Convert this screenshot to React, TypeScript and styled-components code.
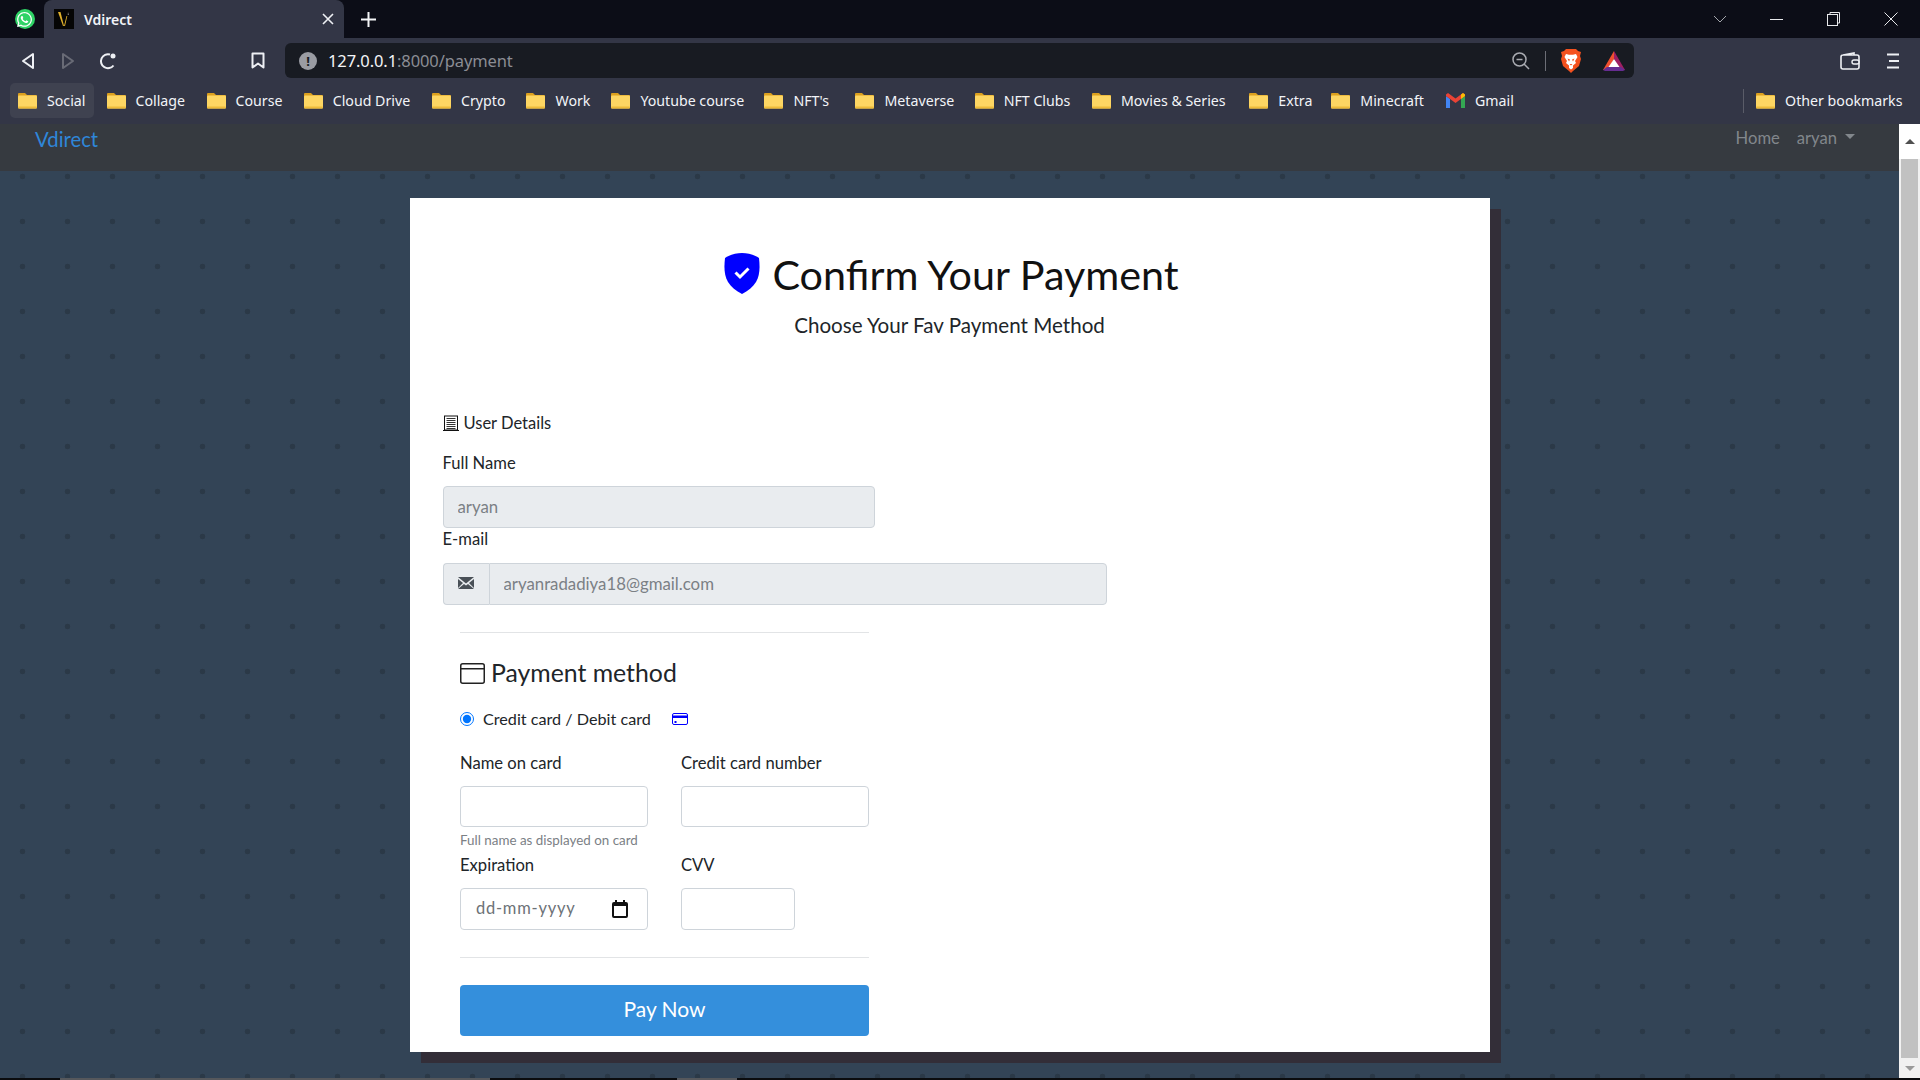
import React from 'react';
import styled, { createGlobalStyle } from 'styled-components';
import { FaWhatsapp } from 'react-icons/fa';

const GlobalStyle = createGlobalStyle`
  html, body {
    margin: 0;
    height: 100%;
    overflow: hidden;
    background: #0c0d17;
  }
  * {
    box-sizing: border-box;
  }
`;

const chromeFont = `'Noto Sans', 'Open Sans', sans-serif`;
const pageFont = `'Lato', 'Noto Sans', sans-serif`;

const Screen = styled.div`
  display: flex;
  flex-direction: column;
  width: 1920px;
  height: 1080px;
  overflow: hidden;
  font-family: ${chromeFont};
`;

/* browser chrome */
const TabStrip = styled.div`
  display: flex;
  align-items: stretch;
  height: 38px;
  background: #0c0d17;
  flex: none;
`;

const PinnedTab = styled.div`
  display: flex;
  align-items: center;
  justify-content: center;
  width: 44px;
  padding-left: 5px;
`;

const WhatsappBadge = styled.div`
  display: flex;
  align-items: center;
  justify-content: center;
  width: 20px;
  height: 20px;
  border-radius: 50%;
  background: #2fd366;
  color: #fff;
  font-size: 17px;
`;

const ActiveTab = styled.div`
  display: flex;
  align-items: center;
  width: 300px;
  padding: 0 10px;
  background: #333646;
  border-radius: 8px 8px 0 0;
`;

const Favicon = styled.svg`
  width: 20px;
  height: 20px;
  flex: none;
`;

const TabTitle = styled.span`
  margin-left: 10px;
  flex: 1;
  color: #f2f4f8;
  font-size: 14px;
  font-weight: 600;
`;

const NewTab = styled.div`
  display: flex;
  align-items: center;
  margin-left: 17px;
`;

const WindowControls = styled.div`
  display: flex;
  align-items: center;
  margin-left: auto;
`;

const WindowButton = styled.div<{ $width: number }>`
  display: flex;
  align-items: center;
  justify-content: center;
  width: ${({ $width }) => $width}px;
`;

const Toolbar = styled.div`
  display: flex;
  align-items: center;
  height: 40px;
  padding-top: 5px;
  background: #333646;
  flex: none;
`;

const ToolButton = styled.div<{ $width: number; $end?: boolean; $left?: number }>`
  display: flex;
  align-items: center;
  justify-content: ${({ $end }) => ($end ? 'flex-end' : 'center')};
  width: ${({ $width }) => $width}px;
  margin-left: ${({ $left }) => $left ?? 0}px;
  padding-right: ${({ $end }) => ($end ? '20px' : '0')};
  flex: none;
`;

const AddressBar = styled.div`
  display: flex;
  align-items: center;
  width: 1349px;
  height: 35px;
  padding: 0 9px 0 14px;
  border-radius: 6px;
  background: #181b22;
  flex: none;
`;

const SiteInfo = styled.div`
  display: flex;
  align-items: center;
  justify-content: center;
  width: 18px;
  height: 18px;
  border-radius: 50%;
  background: #9a9ca3;
  color: #181b22;
  font-size: 13px;
  font-weight: 700;
`;

const Url = styled.span`
  margin-left: 11px;
  color: #8b8d94;
  font-size: 16.5px;
  flex: 1;
  letter-spacing: -0.1px;
`;

const UrlHost = styled.span`
  color: #f4f5f7;
`;

const AddressIcons = styled.div`
  display: flex;
  align-items: center;
`;

const BraveGap = styled.span`
  width: 22px;
`;

const AddressDivider = styled.div`
  width: 1px;
  height: 20px;
  margin: 0 15px;
  background: #6c6e76;
`;

const BookmarksBar = styled.div`
  display: flex;
  align-items: center;
  height: 46px;
  padding: 0 13px 1px 10px;
  background: #333646;
  flex: none;
`;

const Bookmark = styled.div<{ $width?: number; $active?: boolean }>`
  display: flex;
  align-items: center;
  gap: 10px;
  width: ${({ $width }) => ($width ? `${$width}px` : 'auto')};
  height: 35px;
  margin-right: 4.5px;
  padding-left: 8px;
  border-radius: 5px;
  background: ${({ $active }) => ($active ? '#3f4250' : 'transparent')};
  color: #f2f4f8;
  font-size: 14.2px;
  white-space: nowrap;
  flex: none;
`;

const OtherBookmarks = styled.div`
  display: flex;
  align-items: center;
  margin-left: auto;
  padding-left: 4px;
  border-left: 1px solid #5a5c68;
  height: 24px;
`;

/* page */
const PageArea = styled.div`
  display: flex;
  flex: 1;
  min-height: 0;
`;

const Page = styled.div`
  flex: 1;
  background-color: #334456;
  background-image: radial-gradient(circle at 22.5px 7.5px, #2b3947 2.6px, transparent 3.1px);
  background-size: 45px 45px;
  font-family: ${pageFont};
`;

const Navbar = styled.nav`
  display: flex;
  justify-content: space-between;
  height: 47px;
  padding: 0 44px 0 35px;
  background: #363a40;
`;

const Brand = styled.a`
  color: #2f86d9;
  font-size: 20.3px;
  line-height: 30px;
`;

const NavLinks = styled.div`
  display: flex;
  gap: 17px;
  height: 28px;
  align-items: center;
`;

const NavLink = styled.a`
  display: flex;
  align-items: center;
  color: #82878c;
  font-size: 16.6px;
`;

const Caret = styled.span`
  display: inline-block;
  margin-left: 8px;
  margin-top: -3px;
  border-top: 5px solid #82878c;
  border-left: 5px solid transparent;
  border-right: 5px solid transparent;
`;

const Card = styled.main`
  display: flex;
  flex-direction: column;
  width: 1080px;
  height: 854px;
  margin: 27px auto 0;
  padding: 53px 0 16px 33px;
  background: #fff;
  box-shadow: 11px 11px 0 #332e38;
  color: #212529;
`;

const TitleRow = styled.div`
  display: flex;
  align-items: center;
  justify-content: center;
  gap: 12px;
  height: 48px;
  margin-left: -29px;
`;

const Title = styled.h1`
  margin: 0;
  padding-bottom: 2px;
  color: #111;
  font-size: 41.3px;
  font-weight: 400;
  line-height: 48px;
`;

const ShieldGlyph = styled.svg`
  margin-top: -4px;
`;

const Subtitle = styled.p`
  margin: 11px 0 0 -33px;
  color: #212529;
  font-size: 20.6px;
  line-height: 30px;
  text-align: center;
`;

const SectionLabel = styled.div`
  display: flex;
  align-items: center;
  gap: 5px;
  margin-top: 71px;
  font-size: 16.5px;
  line-height: 24px;
`;

const Label = styled.label<{ $gap?: number }>`
  display: block;
  margin-top: ${({ $gap }) => $gap ?? 0}px;
  font-size: 16.6px;
  line-height: 24px;
`;

const Field = styled.input<{ $width?: number; $height?: number }>`
  display: block;
  width: ${({ $width }) => ($width ? `${$width}px` : '100%')};
  height: ${({ $height }) => $height ?? 42}px;
  margin-top: 11px;
  padding: 0 14px 2px;
  border: 1px solid #ced4da;
  border-radius: 4px;
  background: #fff;
  color: #495057;
  font-family: inherit;
  font-size: 16.8px;
  outline: none;
  &:disabled {
    background: #e9ecef;
    color: #7b8085;
    opacity: 1;
  }
`;

const InputGroup = styled.div`
  display: flex;
  width: 664px;
  height: 42px;
  margin-top: 12px;
`;

const Prepend = styled.div`
  display: flex;
  align-items: center;
  justify-content: center;
  width: 46px;
  border: 1px solid #ced4da;
  border-right: none;
  border-radius: 4px 0 0 4px;
  background: #e9ecef;
  padding-bottom: 2px;
`;

const GroupField = styled(Field)`
  flex: 1;
  height: 42px;
  margin: 0;
  border-radius: 0 4px 4px 0;
`;

const PaymentSection = styled.section`
  width: 409px;
  margin: 27px 0 0 17.5px;
`;

const Rule = styled.hr<{ $gap?: number }>`
  margin: ${({ $gap }) => $gap ?? 0}px 0 0;
  border: none;
  border-top: 1px solid #e2e4e6;
`;

const SectionHeading = styled.h4`
  display: flex;
  align-items: center;
  gap: 6px;
  margin: 25px 0 0;
  color: #212529;
  font-size: 24.8px;
  font-weight: 400;
  line-height: 30px;
`;

const RadioRow = styled.div`
  display: flex;
  align-items: center;
  height: 24px;
  margin-top: 19px;
  font-size: 16.2px;
`;

const RadioText = styled.span`
  margin-bottom: 2px;
`;

const Radio = styled.input`
  width: 14px;
  height: 14px;
  margin: 0 9px 0 0;
`;

const CardGlyph = styled.svg`
  margin-left: 21px;
`;

const FormGrid = styled.div`
  display: grid;
  grid-template-columns: 188px 188px;
  column-gap: 33px;
  margin-top: 20px;
`;

const Hint = styled.small`
  display: block;
  margin-top: 5px;
  color: #7b8085;
  font-size: 13.4px;
  line-height: 16px;
`;

const DateField = styled.div`
  display: flex;
  align-items: center;
  justify-content: space-between;
  height: 42px;
  margin-top: 11px;
  padding: 0 19px 0 15px;
  border: 1px solid #ced4da;
  border-radius: 4px;
  color: #6d7277;
  font-size: 16.5px;
`;

const DateText = styled.span`
  margin-bottom: 2px;
  letter-spacing: 0.75px;
`;

const PayButton = styled.button`
  display: block;
  width: 100%;
  height: 51px;
  margin-top: 27px;
  padding-bottom: 5px;
  border: none;
  border-radius: 4px;
  background: #348fdc;
  color: #fff;
  font-family: inherit;
  font-size: 21px;
`;

const Scrollbar = styled.div`
  display: flex;
  flex-direction: column;
  align-items: center;
  width: 21px;
  background: #f1f1f1;
  flex: none;
`;

const ScrollArrow = styled.div<{ $down?: boolean }>`
  display: flex;
  align-items: center;
  justify-content: center;
  width: 21px;
  height: ${({ $down }) => ($down ? '20px' : '35px')};
  background: ${({ $down }) => ($down ? '#f1f1f1' : '#fff')};
  &::after {
    content: '';
    border-left: 5px solid transparent;
    border-right: 5px solid transparent;
    border-top: ${({ $down }) => ($down ? '5px solid #9a9a9a' : 'none')};
    border-bottom: ${({ $down }) => ($down ? 'none' : '5px solid #505050')};
  }
`;

const ScrollThumb = styled.div`
  width: 17px;
  flex: 1;
  background: #c1c1c1;
`;

const BottomEdge = styled.div`
  display: flex;
  height: 2px;
  background: #0b0c0e;
  flex: none;
`;

const EdgeSegment = styled.div<{ $width: number; $left: number }>`
  width: ${({ $width }) => $width}px;
  margin-left: ${({ $left }) => $left}px;
  background: #56585c;
`;

const FolderIcon = () => (
  <svg width="19" height="17" viewBox="0 0 19 17">
    <path d="M1 1h6l2 2h9a1 1 0 0 1 1 1v11a1 1 0 0 1-1 1H1a1 1 0 0 1-1-1V2a1 1 0 0 1 1-1z" fill="#dca01e" />
    <rect x="0" y="3.5" width="19" height="13" rx="1" fill="#fdd663" />
    <rect x="0" y="14.5" width="19" height="2" rx="1" fill="#eebb3a" />
  </svg>
);

const GmailIcon = () => (
  <svg width="19" height="15" viewBox="0 0 19 15">
    <path d="M0 3v12h4V6z" fill="#4285f4" />
    <path d="M15 6v9h4V3z" fill="#34a853" />
    <path d="M0 3l9.5 7L19 3V1.5L17 0 9.5 5.5 2 0 0 1.5z" fill="#ea4335" />
    <path d="M15 6l4-3V1.5L17 0l-2 1.5z" fill="#fbbc04" />
  </svg>
);

const BraveIcon = () => (
  <svg width="20" height="24" viewBox="0 0 20 24">
    <path d="M5 0h10l2 2 3 1-1 4 1 3-2 7-6 5-2 2-2-2-6-5-2-7 1-3-1-4 3-1z" fill="#f4511e" />
    <path d="M5 5l3 .7h4L15 5l1.5 3L14 12l1 2-3 2.5V19l-2 1.5L8 19v-2.5L5 14l1-2L3.500 8z" fill="#fff" />
    <path d="M6.500 9.500l2.500 1-1 2zM13.500 9.500l-2.500 1 1 2zM8.500 15h3L10 16.500z" fill="#f4511e" />
  </svg>
);

const RewardsIcon = () => (
  <svg width="22" height="22" viewBox="0 0 22 22">
    <path d="M11 1L0 20h5l6-11z" fill="#f1502f" />
    <path d="M11 1l11 19h-5l-6-11z" fill="#9e1f63" />
    <path d="M0 20l4-3h14l4 3-2 1H2z" fill="#662d91" />
    <path d="M11 9l5.500 8h-11z" fill="#fff" />
  </svg>
);

const ShieldIcon = () => (
  <ShieldGlyph width="36" height="41" viewBox="0 0 36 41">
    <path
      d="M18 0C24 0 31 2 35 5C36 14 36 22 32 29C29 34 24 38 18 41C12 38 7 34 4 29C0 22 0 14 1 5C5 2 12 0 18 0Z"
      fill="#0000ff"
    />
    <path d="M11.500 19.500L16 24L24.500 15.500" fill="none" stroke="#fff" strokeWidth="3" />
  </ShieldGlyph>
);

const DetailsIcon = () => (
  <svg width="16" height="16" viewBox="0 0 16 16">
    <rect x="1.500" y="1" width="13" height="14" fill="#fff" stroke="#111" />
    <path d="M3.500 3.500h9M3.500 5.500h9M3.500 7.500h9M3.500 9.500h9M3.500 11.500h9M3.500 13.500h9" stroke="#333" strokeWidth="1" />
    <path d="M0 15.500h16" stroke="#111" />
  </svg>
);

const WindowIcon = () => (
  <svg width="25" height="21" viewBox="0 0 25 21">
    <rect x="0.750" y="0.750" width="23.500" height="19.500" rx="2" fill="none" stroke="#222" strokeWidth="1.500" />
    <path d="M0.750 5.750h23.500" stroke="#222" strokeWidth="1.500" />
  </svg>
);

const CreditCardIcon = () => (
  <CardGlyph width="16" height="12" viewBox="0 0 16 12">
    <rect x="0.500" y="0.500" width="15" height="11" rx="1.500" fill="none" stroke="#0000ff" />
    <rect x="0.500" y="2.500" width="15" height="2.500" fill="#0000ff" />
    <rect x="2.500" y="8" width="2" height="2" fill="#0000ff" />
  </CardGlyph>
);

const CalendarIcon = () => (
  <svg width="16" height="18" viewBox="0 0 16 18">
    <path d="M3 0h2v2h6V0h2v2h1a2 2 0 0 1 2 2v12a2 2 0 0 1-2 2H2a2 2 0 0 1-2-2V4a2 2 0 0 1 2-2h1z" fill="#111" />
    <rect x="2" y="6" width="12" height="10" fill="#fff" />
  </svg>
);

const EnvelopeIcon = () => (
  <svg width="16" height="12" viewBox="0 0 16 12">
    <path d="M0 0h16L8 6.500zM0 2l5 4-5 5zM16 2l-5 4 5 5zM0 12l6-5 2 1.500L10 7l6 5z" fill="#495057" />
  </svg>
);

const bookmarks = [
  { label: 'Social', width: 84, active: true },
  { label: 'Collage', width: 95.5 },
  { label: 'Course', width: 92.7 },
  { label: 'Cloud Drive', width: 123.8 },
  { label: 'Crypto', width: 90 },
  { label: 'Work', width: 80.4 },
  { label: 'Youtube course', width: 148.6 },
  { label: "NFT's", width: 86.5 },
  { label: 'Metaverse', width: 114.7 },
  { label: 'NFT Clubs', width: 112.8 },
  { label: 'Movies & Series', width: 152.9 },
  { label: 'Extra', width: 77.5 },
  { label: 'Minecraft', width: 110.1 },
];

const App = () => {
  return (
    <Screen>
      <GlobalStyle />
      <TabStrip>
        <PinnedTab>
          <WhatsappBadge>
            <FaWhatsapp />
          </WhatsappBadge>
        </PinnedTab>
        <ActiveTab>
          <Favicon viewBox="0 0 20 20">
            <rect width="20" height="20" fill="#050505" />
            <path d="M4 3l5 14h1L8 9 6.500 3z" fill="#e0b02c" />
            <path d="M10 17l2.500-10h.8L11 17z" fill="#e0b02c" />
            <path d="M14 3l.6 3h-.8z" fill="#e8e8e8" />
          </Favicon>
          <TabTitle>Vdirect</TabTitle>
          <svg width="12" height="12" viewBox="0 0 12 12">
            <path d="M1 1l10 10M11 1L1 11" stroke="#eef0f4" strokeWidth="1.600" />
          </svg>
        </ActiveTab>
        <NewTab>
          <svg width="15" height="15" viewBox="0 0 15 15">
            <path d="M7.500 0v15M0 7.500h15" stroke="#f4f5f7" strokeWidth="2" />
          </svg>
        </NewTab>
        <WindowControls>
          <WindowButton $width={57}>
            <svg width="14" height="8" viewBox="0 0 14 8">
              <path d="M1 1l6 6 6-6" fill="none" stroke="#a3a5ab" />
            </svg>
          </WindowButton>
          <WindowButton $width={57}>
            <svg width="13" height="1" viewBox="0 0 13 1">
              <path d="M0 .5h13" stroke="#e8e9ec" />
            </svg>
          </WindowButton>
          <WindowButton $width={57}>
            <svg width="13" height="14" viewBox="0 0 13 14">
              <rect x=".5" y="2.500" width="10" height="11" fill="none" stroke="#e8e9ec" />
              <path d="M3 2.500V.5h9.500V11h-2" fill="none" stroke="#e8e9ec" />
            </svg>
          </WindowButton>
          <WindowButton $width={58}>
            <svg width="14" height="14" viewBox="0 0 14 14">
              <path d="M.5.5l13 13M13.500.5l-13 13" stroke="#e8e9ec" />
            </svg>
          </WindowButton>
        </WindowControls>
      </TabStrip>

      <Toolbar>
        <ToolButton $width={56}>
          <svg width="14" height="18" viewBox="0 0 14 18">
            <path d="M12 2v14L2 9z" fill="none" stroke="#eef0f4" strokeWidth="2" strokeLinejoin="round" />
          </svg>
        </ToolButton>
        <ToolButton $width={24}>
          <svg width="14" height="18" viewBox="0 0 14 18">
            <path d="M2 2v14l10-7z" fill="none" stroke="#696b76" strokeWidth="2" strokeLinejoin="round" />
          </svg>
        </ToolButton>
        <ToolButton $width={56}>
          <svg width="18" height="18" viewBox="0 0 18 18">
            <path d="M14.500 13.500A7 7 0 1 1 11 2.500" fill="none" stroke="#eef0f4" strokeWidth="2" />
            <circle cx="14" cy="4" r="2.500" fill="#eef0f4" />
          </svg>
        </ToolButton>
        <ToolButton $width={149} $end>
          <svg width="14" height="17" viewBox="0 0 14 17">
            <path d="M1.500 1.500h11v14L7 11.500l-5.500 4z" fill="none" stroke="#eef0f4" strokeWidth="2" strokeLinejoin="round" />
          </svg>
        </ToolButton>
        <AddressBar>
          <SiteInfo>!</SiteInfo>
          <Url>
            <UrlHost>127.0.0.1</UrlHost>:8000/payment
          </Url>
          <AddressIcons>
            <svg width="18" height="18" viewBox="0 0 18 18">
              <circle cx="7.500" cy="7.500" r="6.500" fill="none" stroke="#a9abb1" strokeWidth="1.500" />
              <path d="M4.500 7.500h6M12 12l5 5" stroke="#a9abb1" strokeWidth="1.500" />
            </svg>
            <AddressDivider />
            <BraveIcon />
            <BraveGap />
            <RewardsIcon />
          </AddressIcons>
        </AddressBar>
        <ToolButton $width={59} $left={186}>
          <svg width="20" height="18" viewBox="0 0 20 18">
            <path d="M3 3l11-2v2M1 5a2 2 0 0 1 2-2h14a2 2 0 0 1 2 2v10a2 2 0 0 1-2 2H3a2 2 0 0 1-2-2z" fill="none" stroke="#eef0f4" strokeWidth="1.600" />
            <rect x="12" y="8" width="7" height="4" rx="2" fill="#333646" stroke="#eef0f4" strokeWidth="1.400" />
          </svg>
        </ToolButton>
        <ToolButton $width={27}>
          <svg width="12" height="16" viewBox="0 0 12 16">
            <path d="M0 1.500h12M2 8h10M0 14.500h12" stroke="#eef0f4" strokeWidth="1.800" />
          </svg>
        </ToolButton>
      </Toolbar>

      <BookmarksBar>
        {bookmarks.map((b) => (
          <Bookmark key={b.label} $width={b.width} $active={b.active}>
            <FolderIcon />
            {b.label}
          </Bookmark>
        ))}
        <Bookmark>
          <GmailIcon />
          Gmail
        </Bookmark>
        <OtherBookmarks>
          <Bookmark>
            <FolderIcon />
            Other bookmarks
          </Bookmark>
        </OtherBookmarks>
      </BookmarksBar>

      <PageArea>
        <Page>
          <Navbar>
            <Brand>Vdirect</Brand>
            <NavLinks>
              <NavLink>Home</NavLink>
              <NavLink>
                aryan
                <Caret />
              </NavLink>
            </NavLinks>
          </Navbar>
          <Card>
            <TitleRow>
              <ShieldIcon />
              <Title>Confirm Your Payment</Title>
            </TitleRow>
            <Subtitle>Choose Your Fav Payment Method</Subtitle>

            <SectionLabel>
              <DetailsIcon />
              User Details
            </SectionLabel>
            <Label $gap={16}>Full Name</Label>
            <Field disabled value="aryan" readOnly $width={432} />
            <Label $gap={-1}>E-mail</Label>
            <InputGroup>
              <Prepend>
                <EnvelopeIcon />
              </Prepend>
              <GroupField disabled value="aryanradadiya18@gmail.com" readOnly />
            </InputGroup>

            <PaymentSection>
              <Rule />
              <SectionHeading>
                <WindowIcon />
                Payment method
              </SectionHeading>
              <RadioRow>
                <Radio type="radio" checked readOnly />
                <RadioText>Credit card / Debit card</RadioText>
                <CreditCardIcon />
              </RadioRow>
              <FormGrid>
                <div>
                  <Label>Name on card</Label>
                  <Field $height={41} />
                  <Hint>Full name as displayed on card</Hint>
                </div>
                <div>
                  <Label>Credit card number</Label>
                  <Field $height={41} />
                </div>
                <div>
                  <Label $gap={5}>Expiration</Label>
                  <DateField>
                    <DateText>dd-mm-yyyy</DateText>
                    <CalendarIcon />
                  </DateField>
                </div>
                <div>
                  <Label $gap={5}>CVV</Label>
                  <Field $width={114} />
                </div>
              </FormGrid>
              <Rule $gap={27} />
              <PayButton>Pay Now</PayButton>
            </PaymentSection>
          </Card>
        </Page>
        <Scrollbar>
          <ScrollArrow />
          <ScrollThumb />
          <ScrollArrow $down />
        </Scrollbar>
      </PageArea>

      <BottomEdge>
        <EdgeSegment $left={60} $width={430} />
        <EdgeSegment $left={187} $width={60} />
      </BottomEdge>
    </Screen>
  );
};

export default App;
